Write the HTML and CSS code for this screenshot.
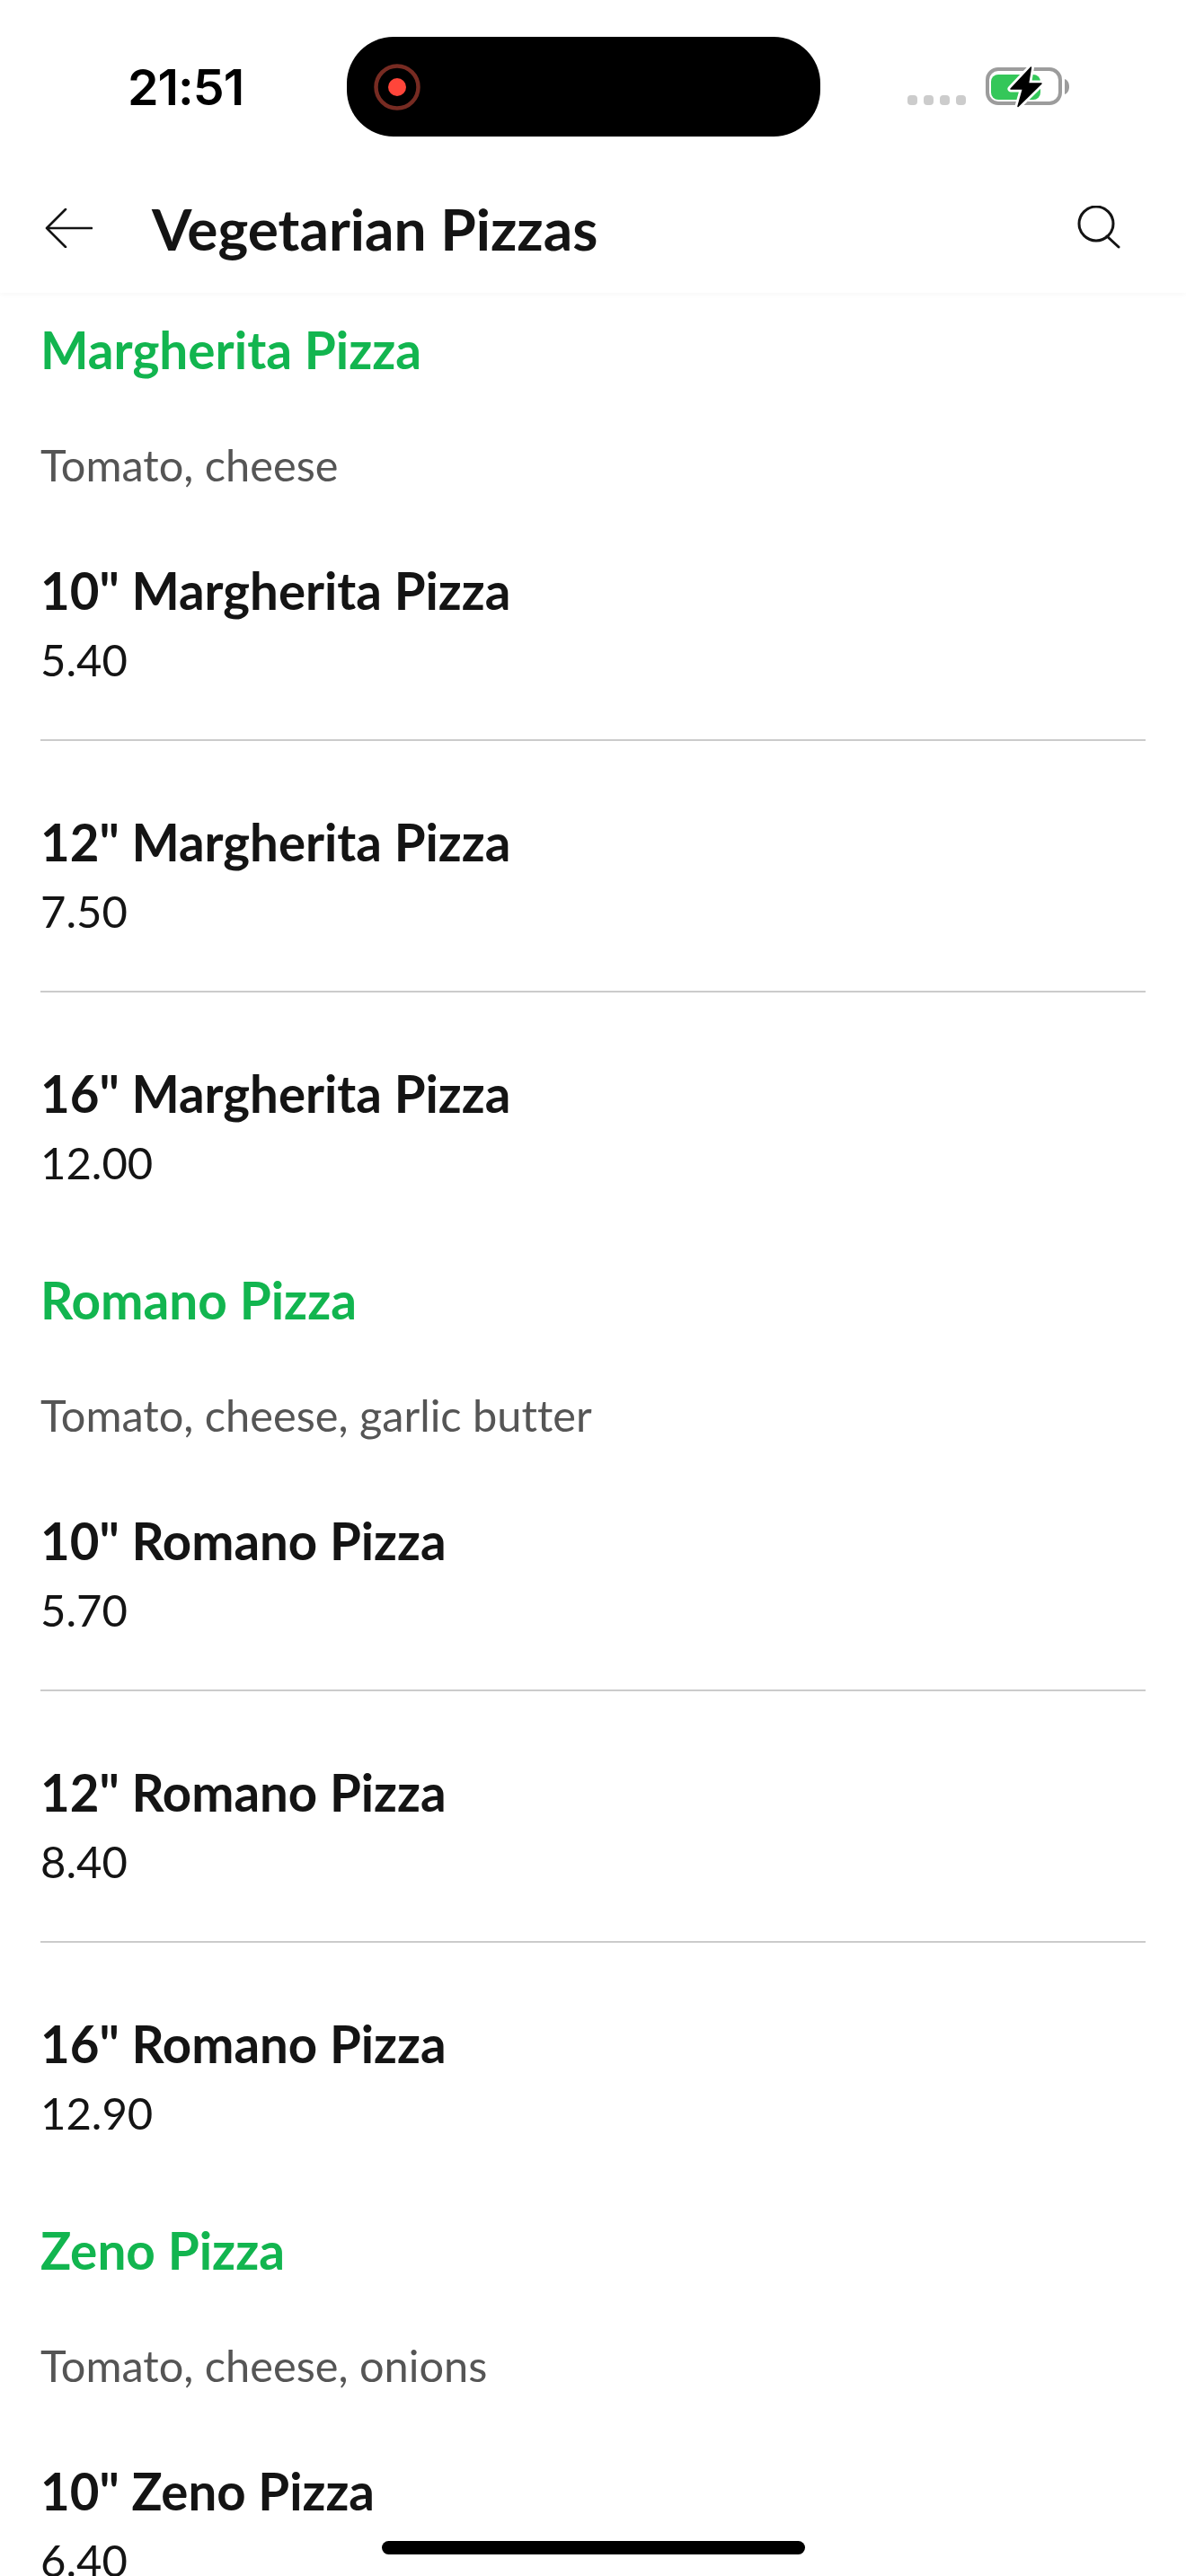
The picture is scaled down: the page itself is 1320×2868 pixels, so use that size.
FILE: index.html
```html
<!DOCTYPE html>
<html lang="en">
<head>
<meta charset="utf-8">
<title>Vegetarian Pizzas</title>
<link rel="stylesheet" href="styles.css">
</head>
<body>
<div class="screen">
  <header class="top">
    <div class="status">
      <span class="time">21:51</span>
      <div class="island">
        <svg class="rec" width="52" height="52" viewBox="0 0 52 52"><circle cx="26" cy="26" r="23.5" fill="none" stroke="#772b22" stroke-width="4.5"/><circle cx="26" cy="26" r="10" fill="#ff453a"/></svg>
      </div>
      <div class="status-right">
        <div class="dots"><i></i><i></i><i></i><i></i></div>
        <svg class="battery" width="96" height="46" viewBox="0 0 96 46">
          <rect x="2" y="3" width="81" height="38" rx="12" fill="#fff" stroke="#9c9c9c" stroke-width="4"/>
          <path d="M88 14c3 1 5 4 5 8.500s-2 7.500-5 8.500z" fill="#9c9c9c"/>
          <rect x="6" y="9" width="55" height="28" rx="8" fill="#34c759"/>
          <path d="M50.500 1 28 25h13.500L36 44.500 62 19H47.500z" fill="#000" stroke="#fff" stroke-width="7" stroke-linejoin="round"/>
          <path d="M50.500 1 28 25h13.500L36 44.500 62 19H47.500z" fill="#000" stroke="#000" stroke-width="1.500" stroke-linejoin="round"/>
        </svg>
      </div>
    </div>
    <nav class="nav">
      <svg class="back" width="54" height="44" viewBox="0 0 54 44"><path d="M53 22H3M24 1 3 22l21 21" fill="none" stroke="#141414" stroke-width="2.6" stroke-linecap="round" stroke-linejoin="round"/></svg>
      <h1 class="title">Vegetarian Pizzas</h1>
      <svg class="search" width="48" height="48" viewBox="0 0 48 48"><circle cx="21" cy="20" r="19" fill="none" stroke="#141414" stroke-width="3"/><path d="M33 34 46 46" fill="none" stroke="#141414" stroke-width="3" stroke-linecap="round"/></svg>
    </nav>
  </header>
  <main class="content">
    <section class="group">
      <h2 class="group-name">Margherita Pizza</h2>
      <p class="group-desc">Tomato, cheese</p>
      <div class="item"><div class="item-name">10" Margherita Pizza</div><div class="item-price">5.40</div></div>
      <div class="item"><div class="item-name">12" Margherita Pizza</div><div class="item-price">7.50</div></div>
      <div class="item"><div class="item-name">16" Margherita Pizza</div><div class="item-price">12.00</div></div>
    </section>
    <section class="group">
      <h2 class="group-name">Romano Pizza</h2>
      <p class="group-desc">Tomato, cheese, garlic butter</p>
      <div class="item"><div class="item-name">10" Romano Pizza</div><div class="item-price">5.70</div></div>
      <div class="item"><div class="item-name">12" Romano Pizza</div><div class="item-price">8.40</div></div>
      <div class="item"><div class="item-name">16" Romano Pizza</div><div class="item-price">12.90</div></div>
    </section>
    <section class="group">
      <h2 class="group-name">Zeno Pizza</h2>
      <p class="group-desc">Tomato, cheese, onions</p>
      <div class="item"><div class="item-name">10" Zeno Pizza</div><div class="item-price">6.40</div></div>
    </section>
  </main>
  <div class="home-bar"></div>
</div>
</body>
</html>
```
FILE: styles.css
```css
* { box-sizing: border-box; }
html, body { margin: 0; padding: 0; background: #fff; }
.screen {
  position: relative;
  width: 1320px;
  height: 2868px;
  overflow: hidden;
  font-family: Lato, sans-serif;
  font-variant-ligatures: none;
  color: #141414;
}
.top {
  position: relative;
  z-index: 1;
  height: 326px;
  background: #fff;
  box-shadow: 0 2px 6px rgba(0, 0, 0, 0.03);
}
.status {
  position: relative;
  height: 190px;
}
.time {
  position: absolute;
  left: 142px;
  top: 66px;
  font-family: Inter, sans-serif;
  font-weight: 600;
  font-size: 55.5px;
  line-height: 62px;
  color: #000;
  letter-spacing: -1px;
}
.island {
  position: absolute;
  left: 386px;
  top: 41px;
  width: 527px;
  height: 111px;
  border-radius: 52px;
  background: #000;
  display: flex;
  align-items: center;
  padding-left: 30px;
}
.status-right {
  position: absolute;
  left: 1010px;
  top: 74px;
  display: flex;
  align-items: flex-end;
  gap: 22px;
}
.dots { display: flex; gap: 7px; padding-bottom: 3px; }
.dots i { width: 11px; height: 11px; border-radius: 4px; background: #ccc; display: block; }
.battery { display: block; }
.nav {
  display: flex;
  align-items: center;
  height: 128px;
  padding: 0 73px 0 49px;
}
.back { flex: none; }
.title {
  flex: 1;
  margin: 2px 0 0 66px;
  font-size: 64px;
  font-weight: 700;
  line-height: 76px;
  white-space: nowrap;
}
.search { flex: none; margin-top: -2px; }
.content { padding: 28px 45px 0; }
.group { margin-bottom: 29px; }
.group-name {
  margin: 0 0 66px;
  font-size: 56.7px;
  line-height: 70px;
  font-weight: 700;
  color: #12b54f;
}
.group-desc {
  margin: 0 0 1px;
  font-size: 48.7px;
  line-height: 54px;
  color: #555;
}
.item {
  padding: 77px 0 47px;
  border-bottom: 2px solid #cbcbcb;
}
.item:last-child { border-bottom: 0; }
.item-name {
  font-size: 56.4px;
  line-height: 70px;
  font-weight: 700;
}
.item-price {
  font-size: 49px;
  line-height: 84px;
}
.home-bar {
  position: absolute;
  left: 425px;
  top: 2829px;
  width: 471px;
  height: 15px;
  border-radius: 8px;
  background: #000;
}
```
